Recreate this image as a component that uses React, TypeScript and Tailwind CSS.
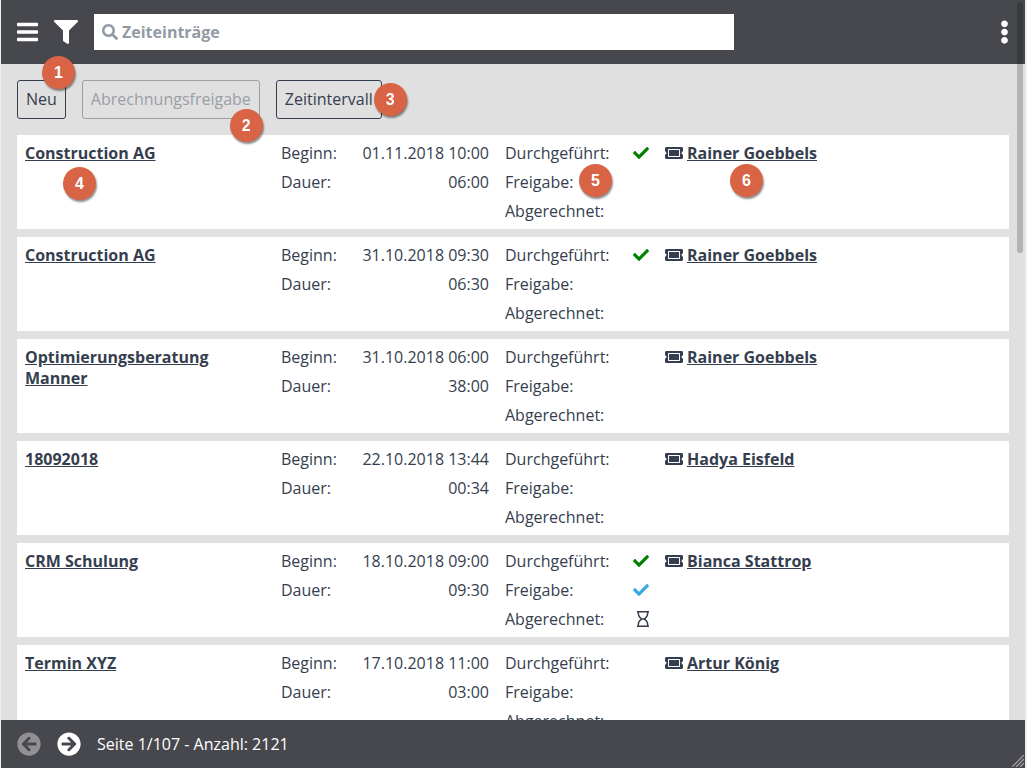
// src/App.tsx
import { useState } from 'react';
import {
  FaArrowCircleLeft,
  FaArrowCircleRight,
  FaBars,
  FaCheck,
  FaEllipsisV,
  FaFilter,
  FaRegHourglass,
  FaSearch,
  FaTicketAlt,
} from 'react-icons/fa';

interface TimeEntry {
  id: number;
  title: string;
  start: string;
  duration: string;
  done?: boolean;
  approved?: boolean;
  billingPending?: boolean;
  person: string;
}

const entries: TimeEntry[] = [
  { id: 1, title: 'Construction AG', start: '01.11.2018 10:00', duration: '06:00', done: true, person: 'Rainer Goebbels' },
  { id: 2, title: 'Construction AG', start: '31.10.2018 09:30', duration: '06:30', done: true, person: 'Rainer Goebbels' },
  { id: 3, title: 'Optimierungsberatung Manner', start: '31.10.2018 06:00', duration: '38:00', person: 'Rainer Goebbels' },
  { id: 4, title: '18092018', start: '22.10.2018 13:44', duration: '00:34', person: 'Hadya Eisfeld' },
  { id: 5, title: 'CRM Schulung', start: '18.10.2018 09:00', duration: '09:30', done: true, approved: true, billingPending: true, person: 'Bianca Stattrop' },
  { id: 6, title: 'Termin XYZ', start: '17.10.2018 11:00', duration: '03:00', person: 'Artur König' },
];

function Marker({ n, className }: { n: number; className: string }) {
  return (
    <span
      className={`pointer-events-none absolute z-10 flex size-[33px] items-center justify-center rounded-full bg-[#d96445] font-['Liberation_Sans',sans-serif] text-base font-bold text-white shadow-[1px_2px_2px_rgba(0,0,0,0.45)] ${className}`}
    >
      {n}
    </span>
  );
}

function EntryCard({ entry, marked }: { entry: TimeEntry; marked: boolean }) {
  return (
    <li className="relative grid grid-cols-[240px_208px_144px_1fr] gap-x-4 bg-white px-2 pt-1 pb-[3px] leading-[29px]">
      <div className="py-1 leading-[21px] font-bold">
        <a href="#entry" className="underline">{entry.title}</a>
      </div>
      <dl>
        <div className="flex justify-between">
          <dt>Beginn:</dt>
          <dd>{entry.start}</dd>
        </div>
        <div className="flex justify-between">
          <dt>Dauer:</dt>
          <dd>{entry.duration}</dd>
        </div>
      </dl>
      <dl>
        <div className="flex items-center justify-between">
          <dt>Durchgeführt:</dt>
          <dd className="pb-0.5">{entry.done && <FaCheck className="text-[#008000]" />}</dd>
        </div>
        <div className="flex items-center justify-between">
          <dt>Freigabe:</dt>
          <dd className="pb-0.5">{entry.approved && <FaCheck className="text-[#36a9e1]" />}</dd>
        </div>
        <div className="flex items-center justify-between">
          <dt>Abgerechnet:</dt>
          <dd className="pb-0.5">{entry.billingPending && <FaRegHourglass className="h-4 w-3" />}</dd>
        </div>
      </dl>
      <div className="flex h-[29px] items-center gap-1 font-bold">
        <FaTicketAlt className="mb-0.5 h-4 w-[18px]" />
        <a href="#person" className="underline">{entry.person}</a>
      </div>
      {marked && (
        <>
          <Marker n={4} className="top-8 left-[46px]" />
          <Marker n={5} className="top-[29px] left-[562px]" />
          <Marker n={6} className="top-[29px] left-[713px]" />
        </>
      )}
    </li>
  );
}

export default function App() {
  const [search, setSearch] = useState('');

  return (
    <div className="relative flex h-screen flex-col bg-[#f0f0f0] pr-[2px] pl-px font-['Open_Sans',sans-serif] text-base text-[#353e4e]">
      <header className="flex h-16 shrink-0 items-center bg-[#47484d] px-4 text-white">
        <button type="button" aria-label="Menü">
          <FaBars className="h-6 w-[21px]" />
        </button>
        <button type="button" aria-label="Filter" className="ml-4">
          <FaFilter className="size-6" />
        </button>
        <label className="ml-4 flex h-9 w-full max-w-[640px] items-center gap-1 bg-white px-2 text-[#929aa5]">
          <FaSearch className="size-4 shrink-0" />
          <input
            type="text"
            aria-label="Zeiteinträge"
            placeholder="Zeiteinträge"
            value={search}
            onChange={(e) => setSearch(e.target.value)}
            className="w-full font-bold text-[#353e4e] outline-none placeholder:text-[#929aa5]"
          />
        </label>
        <button type="button" aria-label="Mehr" className="ml-auto">
          <FaEllipsisV className="h-6 w-[9px]" />
        </button>
      </header>

      <div className="flex shrink-0 gap-4 bg-[#e0e0e0] p-4">
        <div className="relative">
          <button type="button" className="h-[39px] rounded-[3px] border border-[#353e4e] px-2 pb-0.5">Neu</button>
          <Marker n={1} className="-top-6 left-[25px]" />
        </div>
        <div className="relative">
          <button type="button" disabled className="h-[39px] rounded-[3px] border border-[#9b9ea5] px-2 pb-0.5 text-[#9b9ea5]">
            Abrechnungsfreigabe
          </button>
          <Marker n={2} className="top-[29px] -right-[3px]" />
        </div>
        <div className="relative">
          <button type="button" className="h-[39px] rounded-[3px] border border-[#353e4e] px-2 pb-0.5">Zeitintervall</button>
          <Marker n={3} className="top-[3px] -right-[25px]" />
        </div>
      </div>

      <main className="min-h-0 flex-1 overflow-y-auto bg-[#e0e0e0] px-4 pb-4 [scrollbar-width:none]">
        <ul className="flex flex-col gap-2">
          {entries.map((entry, i) => (
            <EntryCard key={entry.id} entry={entry} marked={i === 0} />
          ))}
        </ul>
      </main>

      <footer className="flex h-12 shrink-0 items-center gap-4 bg-[#47484d] px-4 text-white">
        <button type="button" disabled aria-label="Vorherige Seite" className="opacity-40">
          <FaArrowCircleLeft className="size-6" />
        </button>
        <button type="button" aria-label="Nächste Seite">
          <FaArrowCircleRight className="size-6" />
        </button>
        <span>Seite 1/107 - Anzahl: 2121</span>
      </footer>

      {/* overlay scrollbar and resize grip */}
      <div className="pointer-events-none absolute top-0.5 right-1 z-20 h-[251px] w-1.5 rounded-full bg-black/20" />
      <svg viewBox="0 0 12 12" className="absolute right-[3px] bottom-px size-3" stroke="#a8a8aa" strokeWidth="1.2" fill="none">
        <path d="M0 12 12 0M4 12 12 4M8 12 12 8" />
      </svg>
    </div>
  );
}
